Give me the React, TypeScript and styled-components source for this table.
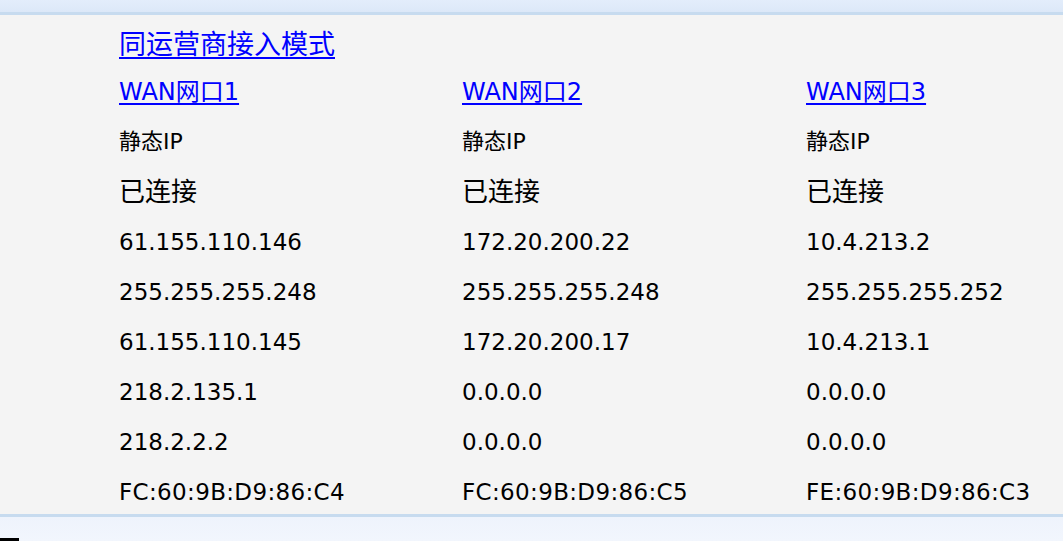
import * as React from "react";
import styled, { createGlobalStyle } from "styled-components";

interface IWan {
  name: string;
  type: string;
  status: string;
  ip: string;
  mask: string;
  gateway: string;
  dns1: string;
  dns2: string;
  mac: string;
}

const wans: IWan[] = [
  {
    name: "WAN网口1",
    type: "静态IP",
    status: "已连接",
    ip: "61.155.110.146",
    mask: "255.255.255.248",
    gateway: "61.155.110.145",
    dns1: "218.2.135.1",
    dns2: "218.2.2.2",
    mac: "FC:60:9B:D9:86:C4"
  },
  {
    name: "WAN网口2",
    type: "静态IP",
    status: "已连接",
    ip: "172.20.200.22",
    mask: "255.255.255.248",
    gateway: "172.20.200.17",
    dns1: "0.0.0.0",
    dns2: "0.0.0.0",
    mac: "FC:60:9B:D9:86:C5"
  },
  {
    name: "WAN网口3",
    type: "静态IP",
    status: "已连接",
    ip: "10.4.213.2",
    mask: "255.255.255.252",
    gateway: "10.4.213.1",
    dns1: "0.0.0.0",
    dns2: "0.0.0.0",
    mac: "FE:60:9B:D9:86:C3"
  }
];

const GlobalStyle = createGlobalStyle`
  html, body {
    margin: 0;
    padding: 0;
    background: #eef3fc;
    font-family: "DejaVu Sans", "Noto Sans CJK SC", sans-serif;
    color: #000;
  }
`;

const Page = styled.div`
  width: 1063px;
  height: 541px;
  overflow: hidden;
  display: flex;
  flex-direction: column;
`;

const TopBand = styled.div`
  height: 12px;
  background: linear-gradient(#e3edfb, #dce8f8);
  border-bottom: 3px solid #c7dbef;
`;

const Panel = styled.div`
  background: #f4f4f4;
  height: 502px;
  padding: 2px 0 0 119px;
  box-sizing: border-box;
  border-bottom: 3px solid #c7dbef;
`;

const Grid = styled.div`
  display: grid;
  grid-template-columns: 343px 344px 1fr;
  grid-auto-rows: 50px;
  align-items: center;
`;

const TitleRow = styled.div`
  grid-column: 1 / -1;
`;

const Link = styled.a<{ $size?: number }>`
  color: #0000ff;
  text-decoration: underline;
  text-decoration-thickness: 2px;
  text-underline-offset: 3px;
  font-size: ${p => p.$size || 24}px;
  cursor: pointer;
`;

const Cell = styled.div<{ $size?: number; $spacing?: number }>`
  font-size: ${p => p.$size || 23}px;
  letter-spacing: ${p => p.$spacing || 0}px;
  line-height: 1;
  white-space: nowrap;
`;

const Bottom = styled.div`
  flex: 1;
  background: linear-gradient(#eef3fc, #f2f6fd);
  display: flex;
  align-items: flex-end;
`;

const Stub = styled.div`
  width: 19px;
  height: 3px;
  background: #000;
`;

const fields: { key: keyof IWan; size?: number; spacing?: number }[] = [
  { key: "type", size: 22 },
  { key: "status", size: 26 },
  { key: "ip" },
  { key: "mask" },
  { key: "gateway" },
  { key: "dns1" },
  { key: "dns2" },
  { key: "mac", spacing: 0.35 }
];

export default function App() {
  return (
    <Page>
      <GlobalStyle />
      <TopBand />
      <Panel>
        <Grid>
          <TitleRow>
            <Link $size={27}>同运营商接入模式</Link>
          </TitleRow>
          {wans.map(w => (
            <Cell key={w.name}>
              <Link>{w.name}</Link>
            </Cell>
          ))}
          {fields.map(f =>
            wans.map(w => (
              <Cell key={f.key + w.name} $size={f.size} $spacing={f.spacing}>
                {w[f.key]}
              </Cell>
            ))
          )}
        </Grid>
      </Panel>
      <Bottom>
        <Stub />
      </Bottom>
    </Page>
  );
}
